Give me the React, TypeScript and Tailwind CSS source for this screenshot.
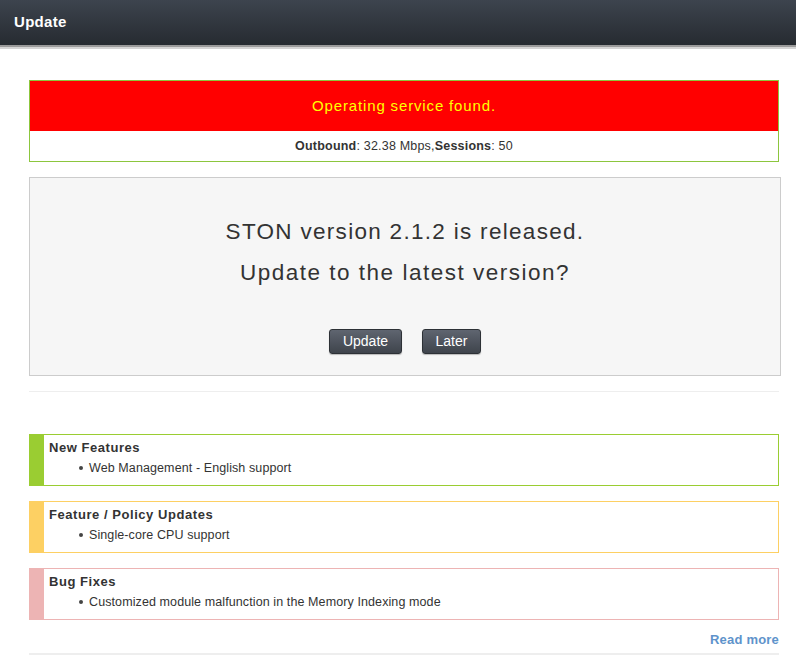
import React from "react";

const font = { fontFamily: '"Liberation Sans", Arial, sans-serif' };

function Note({ title, item, bar, border }: { title: string; item: string; bar: string; border: string }) {
  return (
    <div className={`flex h-[52px] border ${border}`}>
      <div className={`w-[14px] ${bar}`} />
      <div className="flex flex-col pl-[5px] pt-[5px]">
        <div className="text-[13px] font-bold leading-[16px] tracking-[0.55px] text-[#333]">{title}</div>
        <div className="mt-[4px] flex items-center pl-[30px] text-[12.5px] leading-[16px] tracking-[0.1px] text-[#333]">
          <span className="mr-[6px] inline-block h-[4px] w-[4px] rounded-full bg-[#444]" />
          {item}
        </div>
      </div>
    </div>
  );
}

export default function App() {
  return (
    <div className="min-h-[666px] w-[796px] bg-white" style={font}>
      <div className="flex h-[45px] items-center bg-gradient-to-b from-[#3d444e] to-[#262b31] pl-[14px] text-[15px] font-bold tracking-[0.3px] text-white">
        Update
      </div>
      <div className="h-[2px] bg-[#9a9a9a]" />
      <div className="h-[2px] bg-[#d4d4d4]" />

      <div className="ml-[29px] flex w-[752px] flex-col">
        <div className="mt-[31px] w-[750px] border border-[#8cc63e]">
          <div className="flex h-[50px] items-center justify-center bg-[#ff0000] text-[15px] tracking-[0.85px] text-[#ffff00]">
            Operating service found.
          </div>
          <div className="flex h-[30px] items-center justify-center text-[12.5px] tracking-[0.2px] text-[#333]">
            <b>Outbound</b>: 32.38 Mbps,<b>Sessions</b>: 50
          </div>
        </div>

        <div className="mt-[15px] flex h-[199px] w-[752px] flex-col items-center border border-[#cccccc] bg-[#f6f6f6]">
          <div className="mt-[33px] text-[22.5px] leading-[41px] tracking-[1.3px] text-[#333]">STON version 2.1.2 is released.</div>
          <div className="text-[22.5px] leading-[41px] tracking-[1.5px] text-[#333]">Update to the latest version?</div>
          <div className="mt-[36px] flex gap-[20px]">
            <button className="h-[25px] w-[73px] rounded-[3px] border border-[#2d3136] bg-gradient-to-b from-[#5f6570] to-[#3f444c] text-[14px] text-white shadow-[0_1px_1px_rgba(0,0,0,0.25)]">
              Update
            </button>
            <button className="h-[25px] w-[59px] rounded-[3px] border border-[#2d3136] bg-gradient-to-b from-[#5f6570] to-[#3f444c] text-[14px] text-white shadow-[0_1px_1px_rgba(0,0,0,0.25)]">
              Later
            </button>
          </div>
        </div>

        <div className="mt-[15px] h-[1px] w-[750px] bg-[#eeeeee]" />

        <div className="mt-[42px] flex w-[750px] flex-col gap-[15px]">
          <Note title="New Features" item="Web Management - English support" bar="bg-[#9acd32]" border="border-[#9acd32]" />
          <Note title="Feature / Policy Updates" item="Single-core CPU support" bar="bg-[#fdd063]" border="border-[#fdd063]" />
          <Note title="Bug Fixes" item="Customized module malfunction in the Memory Indexing mode" bar="bg-[#edb4b4]" border="border-[#edb4b4]" />
        </div>

        <div className="mt-[12px] w-[750px] text-right text-[13px] font-bold leading-[16px] tracking-[0.2px] text-[#5e93cb]">
          Read more
        </div>
        <div className="mt-[5px] h-[2px] w-[750px] bg-[#eeeeee]" />
      </div>
    </div>
  );
}
